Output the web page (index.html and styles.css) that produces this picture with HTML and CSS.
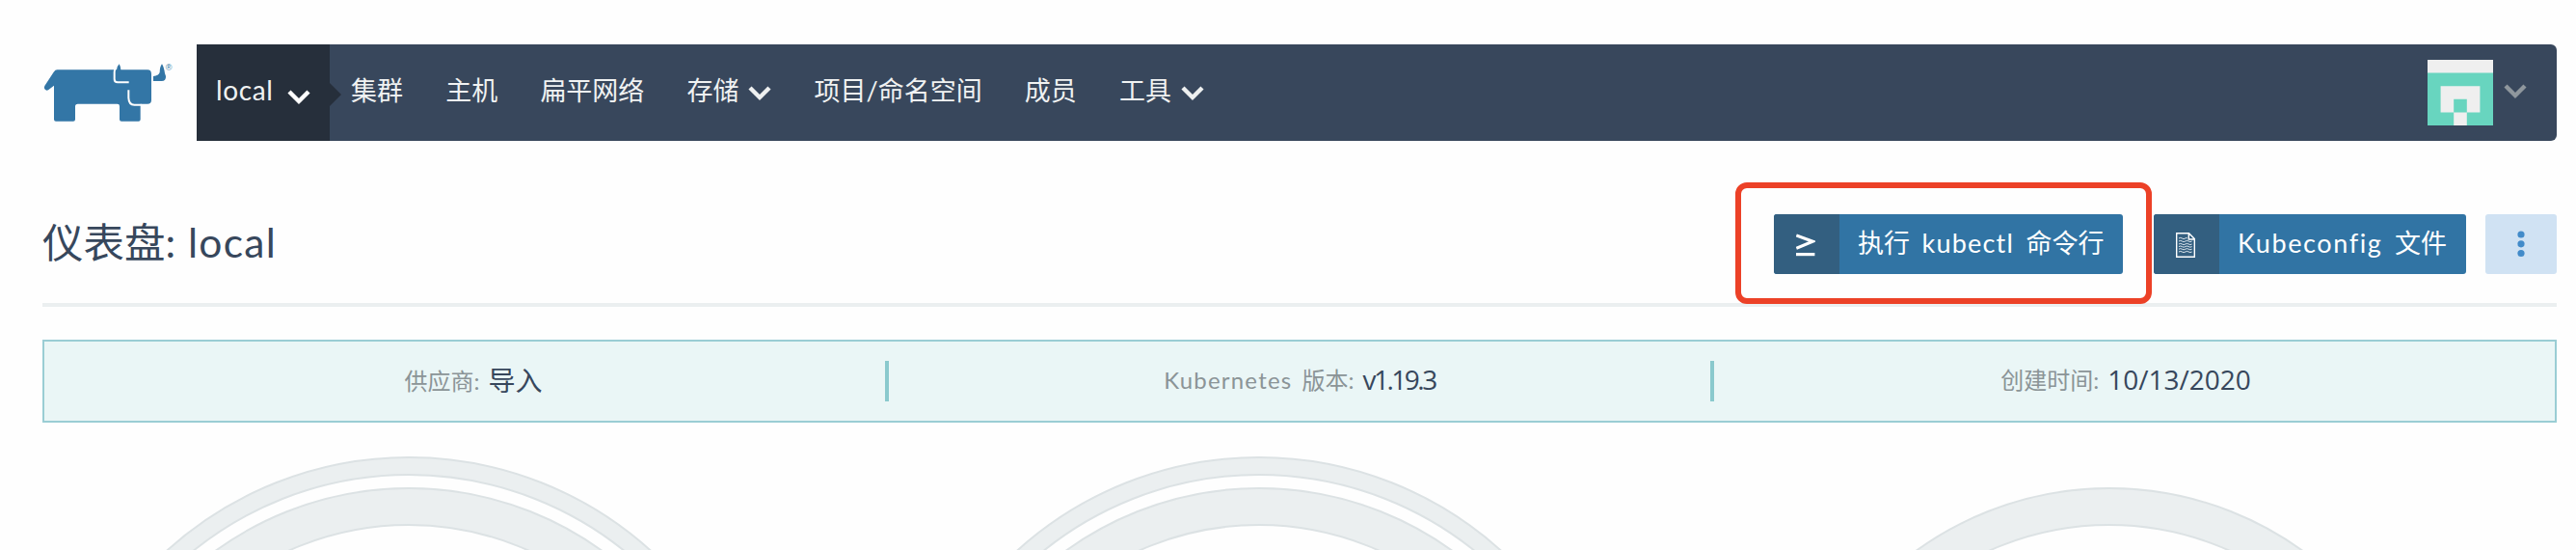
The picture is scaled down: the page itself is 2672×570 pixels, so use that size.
FILE: index.html
```html
<!DOCTYPE html>
<html lang="zh-CN">
<head>
<meta charset="utf-8">
<title>仪表盘: local</title>
<link rel="stylesheet" href="styles.css">
</head>
<body>
<header class="header">
  <a class="logo">
    <svg viewBox="75 105 402 186" width="134" height="62">
      <path class="logo-fill" d="M118 127H303Q304 116 311 109Q316 118 316 127H399Q411 127 411 140V221Q411 233 399 233H377V281Q377 287 371 287H318Q312 287 312 281V240Q312 233 305 233H182Q174 233 174 241V281Q174 287 168 287H114Q108 287 108 281V176L90 190Q84 193 79 187Q76 182 79 177L107 134Q112 127 118 127Z"/>
      <path class="logo-fill" d="M444 109Q450 118 453 138L456 147Q457 162 443 162H417V147Q434 146 437 135Q437 118 444 109Z"/>
      <path class="logo-gap" d="M303 108Q296 122 296 134V156Q296 166 306 166H341M340 190V214Q341 236 358 236H380"/>
      <text class="logo-mark" x="455" y="130">®</text>
    </svg>
  </a>
  <nav class="nav">
    <a class="cluster"><span>local</span>
      <svg class="chev" viewBox="0 0 24 16"><path d="M2 2L12 12L22 2"/></svg>
    </a>
    <div class="menu">
      <a>集群</a>
      <a>主机</a>
      <a>扁平网络</a>
      <a>存储<svg class="chev" viewBox="0 0 24 16"><path d="M2 2L12 12L22 2"/></svg></a>
      <a>项目/命名空间</a>
      <a>成员</a>
      <a>工具<svg class="chev" viewBox="0 0 24 16"><path d="M2 2L12 12L22 2"/></svg></a>
    </div>
    <div class="user">
      <svg class="avatar" viewBox="0 0 5 5"><path class="av-bg" d="M0 0H5V5H0Z"/><path class="av-fg" d="M0 1H5V5H3V4H4V2H1V4H2V5H0ZM2 3H3V4H2Z"/></svg>
      <svg class="chev" viewBox="0 0 24 16"><path d="M2 2L12 12L22 2"/></svg>
    </div>
  </nav>
</header>
<main class="page">
  <section class="title-bar">
    <h1>仪表盘: <span>local</span></h1>
    <div class="actions">
      <div class="highlight-wrap">
        <button class="btn"><span class="btn-icon"><svg width="20" height="24" viewBox="0 0 20 24"><path class="ic-prompt" d="M.3 2L17.3 8.2L.3 15.3"/><path class="ic-prompt" d="M0 21.6H19.4"/></svg></span><span class="btn-text kubectl">执行 <span>kubectl</span> 命令行</span></button>
        <div class="highlight"></div>
      </div>
      <button class="btn"><span class="btn-icon"><svg width="20" height="26" viewBox="0 0 20 26"><path class="ic-doc" d="M.7 .7H13.5L19.3 6.5V25.3H.7ZM13.3 .7V7H19.3"/><path class="ic-lines" d="M3 6q1.7-1.2 3.4 0t3.4 0t2 0M3 9q1.7-1.2 3.4 0t3.4 0t3.4 0t3.4 0M3 12q1.7-1.2 3.4 0t3.4 0t3.4 0t3.4 0M3 14.6q1.7-1.2 3.4 0t3.4 0t3.4 0t3.4 0M3 17.2q1.7-1.2 3.4 0t3.4 0t3.4 0t3.4 0M3 20q1.7-1.2 3.4 0t3.4 0t3.4 0t3.4 0"/></svg></span><span class="btn-text config"><span>Kubeconfig</span> 文件</span></button>
      <button class="more"><svg width="8" height="28" viewBox="0 0 8 28"><circle cx="4" cy="4" r="3.6"/><circle cx="4" cy="13.8" r="3.6"/><circle cx="4" cy="23.5" r="3.6"/></svg></button>
    </div>
  </section>
  <section class="banner">
    <div class="fact"><label>供应商:</label><span>导入</span></div>
    <i class="divider"></i>
    <div class="fact middle"><label><b>Kubernetes</b> 版本:</label><span class="version">v1.19.3</span></div>
    <i class="divider"></i>
    <div class="fact"><label>创建时间:</label><span class="date">10/13/2020</span></div>
  </section>
  <section class="gauges">
    <svg viewBox="0 0 760 98"><circle class="ring" cx="380" cy="376" r="365" stroke-width="20"/><circle class="ring-in" cx="380" cy="376" r="365" stroke-width="16"/><circle class="ring" cx="380" cy="376" r="323" stroke-width="40"/><circle class="ring-in" cx="380" cy="376" r="323" stroke-width="36"/></svg>
    <svg viewBox="0 0 760 98"><circle class="ring" cx="380" cy="376" r="365" stroke-width="20"/><circle class="ring-in" cx="380" cy="376" r="365" stroke-width="16"/><circle class="ring" cx="380" cy="376" r="323" stroke-width="40"/><circle class="ring-in" cx="380" cy="376" r="323" stroke-width="36"/></svg>
    <svg viewBox="0 0 760 98"><circle class="ring" cx="380" cy="376" r="323" stroke-width="40"/><circle class="ring-in" cx="380" cy="376" r="323" stroke-width="36"/></svg>
  </section>
</main>
</body>
</html>
```
FILE: styles.css
```css
* { box-sizing: border-box; }
body {
  margin: 0;
  height: 570px;
  overflow: hidden;
  background: #fefefe;
  color: #37475c;
  font-family: Lato, "Noto Sans CJK SC", sans-serif;
}
svg { display: block; flex: none; }
.header { display: flex; padding: 46px 20px 0 44px; height: 146px; }
.logo { width: 160px; padding-top: 19px; padding-left: 1px; }
.logo-fill { fill: #3376a6; }
.logo-gap { fill: none; stroke: #fefefe; stroke-width: 6; }
.logo-mark { fill: #3376a6; font: 27px "Liberation Sans", sans-serif; }
.nav {
  flex: 1;
  display: flex;
  height: 100px;
  background: #38475c;
  border-radius: 0 6px 6px 0;
  color: #f0f2f2;
  font-size: 27px;
}
.chev { width: 24px; height: 16px; fill: none; stroke: #eef0f0; stroke-width: 4.4; }
.cluster {
  position: relative;
  width: 138px;
  display: flex;
  align-items: center;
  padding: 0 20px 6px;
  background: #262f3b;
}
.cluster span { font-size: 28px; width: 74px; letter-spacing: 0.6px; }
.cluster .chev { stroke: #fff; margin-top: 15px; }
.cluster::after {
  content: "";
  position: absolute;
  left: 100%;
  top: 40px;
  border: 12px solid transparent;
  border-left-color: #262f3b;
  border-right: 0;
}
.menu { display: flex; gap: 44.2px; padding-left: 22px; height: 93px; align-items: center; white-space: nowrap; }
.menu a { display: flex; align-items: center; }
.menu .chev { margin-left: 9.7px; margin-top: 8px; }
.user { margin-left: auto; display: flex; align-items: flex-start; padding: 16px 31px 0 0; gap: 11px; }
.user .chev { stroke: #8f979d; margin-top: 25px; }
.avatar { width: 68px; height: 68px; }
.av-bg { fill: #efefef; }
.av-fg { fill: #68d5bf; }
.page { padding: 0 20px 0 44px; }
.title-bar {
  height: 172px;
  padding-top: 76px;
  display: flex;
  justify-content: space-between;
  border-bottom: 4px solid #ebeff0;
}
h1 { margin: 0; font-weight: 400; font-size: 42.5px; line-height: 62px; margin-top: -2px; word-spacing: 2px; }
h1 span { letter-spacing: 1.3px; }
.actions { display: flex; height: 62px; }
.highlight-wrap { position: relative; margin-right: 32px; }
.highlight {
  position: absolute;
  left: -40.5px;
  top: -33px;
  width: 432px;
  height: 126px;
  border: 6px solid #ec4127;
  border-radius: 12px;
}
button { border: 0; padding: 0; font: inherit; }
.btn {
  display: flex;
  height: 62px;
  background: #3174a4;
  color: #fff;
  font-size: 27px;
  border-radius: 3px;
  overflow: hidden;
}
.btn-icon { width: 68px; height: 62px; background: #335f80; display: flex; align-items: center; justify-content: center; padding: 2px 2px 0 0; }
.btn-text { line-height: 60px; text-align: left; padding-left: 19px; white-space: nowrap; word-spacing: 5.6px; }
.kubectl { width: 294px; }
.kubectl span { letter-spacing: 1.2px; }
.config { width: 256px; }
.config span { letter-spacing: 1.6px; }
.ic-prompt { fill: none; stroke: #fff; stroke-width: 3.2; }
.ic-doc { fill: none; stroke: #fff; stroke-width: 1.4; }
.ic-lines { fill: none; stroke: #dfe8ee; stroke-width: 1; }
.more { width: 74px; height: 62px; margin-left: 20px; border-radius: 3px; background: #d0e2f3; display: flex; align-items: center; justify-content: center; }
.more svg { fill: #428bc9; }
.banner {
  margin-top: 34px;
  height: 86px;
  border: 2px solid #9acdd4;
  background: #eaf6f6;
  display: flex;
  align-items: center;
  padding: 0 18px;
}
.fact { flex: 1; display: flex; justify-content: center; align-items: baseline; white-space: nowrap; padding-bottom: 4px; }
.fact.middle { flex: 0 0 852px; }
.fact label { font-size: 24px; color: #8b9497; margin-right: 9px; transform: translateY(-1.5px); word-spacing: 4px; }
.fact label b { font-weight: 400; letter-spacing: 1.2px; }
.fact span { font-size: 28px; }
.fact .version, .fact .date { font-family: "Open Sans", sans-serif; }
.fact .version { letter-spacing: -2.5px; }
.divider { width: 4px; height: 42px; background: #8ac9cd; }
.gauges { margin-top: 34px; display: flex; gap: 122px; }
.gauges svg { width: 760px; height: 98px; }
.ring { fill: none; stroke: #dce2e4; }
.ring-in { fill: none; stroke: #ebeff0; }
```
